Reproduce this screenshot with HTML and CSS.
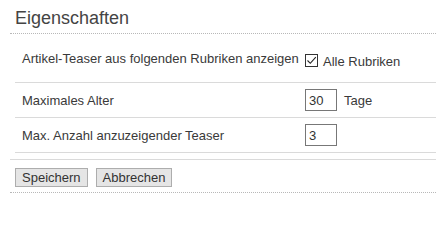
FILE: index.html
```html
<!DOCTYPE html>
<html lang="de">
<head>
<meta charset="utf-8">
<title>Eigenschaften</title>
<link rel="stylesheet" href="styles.css">
</head>
<body>
<div class="panel">
  <h2 class="title">Eigenschaften</h2>
  <div class="rows">
    <div class="row row-first">
      <div class="label label-top">Artikel-Teaser aus folgenden Rubriken anzeigen</div>
      <div class="value value-check">
        <span class="check">
          <svg width="11" height="11" viewBox="0 0 11 11"><path d="M1.5 5.5 L4.3 8.3 L9.8 2.2" fill="none" stroke="#222" stroke-width="1.1"/></svg>
        </span>
        <span class="check-label">Alle Rubriken</span>
      </div>
    </div>
    <div class="row">
      <div class="label">Maximales Alter</div>
      <div class="value">
        <input class="num" type="text" value="30">
        <span class="unit">Tage</span>
      </div>
    </div>
    <div class="row">
      <div class="label">Max. Anzahl anzuzeigender Teaser</div>
      <div class="value">
        <input class="num" type="text" value="3">
      </div>
    </div>
  </div>
  <div class="actions">
    <button class="btn" type="button">Speichern</button>
    <button class="btn" type="button">Abbrechen</button>
  </div>
</div>
</body>
</html>
```
FILE: styles.css
```css
html, body {
  margin: 0;
  padding: 0;
  background: #fff;
}
body {
  font-family: "Liberation Sans", Arial, sans-serif;
  font-size: 13px;
  color: #3a3a3a;
}
.panel {
  padding-left: 10px;
}
.title {
  margin: 0;
  padding: 8px 0 5px 5px;
  font-size: 18px;
  font-weight: normal;
  line-height: 20px;
  color: #444;
  border-bottom: 1px dotted #b8b8b8;
}
.rows {
  margin-left: 5px;
}
.row {
  display: flex;
  align-items: center;
  height: 34px;
  border-bottom: 1px solid #dadada;
}
.row-first {
  align-items: flex-start;
  height: 48px;
}
.label {
  flex: 0 0 290px;
  padding-left: 7px;
  box-sizing: border-box;
  white-space: nowrap;
}
.label-top {
  padding-top: 17px;
}
.value {
  display: flex;
  align-items: center;
  white-space: nowrap;
}
.value-check {
  padding-top: 20px;
  align-items: flex-end;
}
.check {
  width: 13px;
  height: 13px;
  box-sizing: border-box;
  border: 1px solid #333;
  background: #fff;
  display: flex;
  align-items: center;
  justify-content: center;
}
.check svg {
  display: block;
}
.check-label {
  margin-left: 5px;
  line-height: 13px;
  position: relative;
  top: 1px;
}
.num {
  width: 32px;
  height: 22px;
  box-sizing: border-box;
  border: 1px solid #777;
  padding: 0 3px;
  margin: 0;
  font-family: "Liberation Sans", Arial, sans-serif;
  font-size: 13px;
  color: #333;
  background: #fff;
  outline: none;
}
.unit {
  margin-left: 7px;
}
.actions {
  margin-top: 6px;
  border-top: 1px solid #dadada;
  border-bottom: 1px dotted #b8b8b8;
  padding: 8px 0 5px 5px;
  display: flex;
  gap: 8px;
}
.btn {
  height: 19px;
  padding: 0 6px;
  margin: 0;
  border: 1px solid #adadad;
  background: #e5e5e5;
  font-family: "Liberation Sans", Arial, sans-serif;
  font-size: 13px;
  line-height: 17px;
  color: #333;
  border-radius: 0;
}
```
